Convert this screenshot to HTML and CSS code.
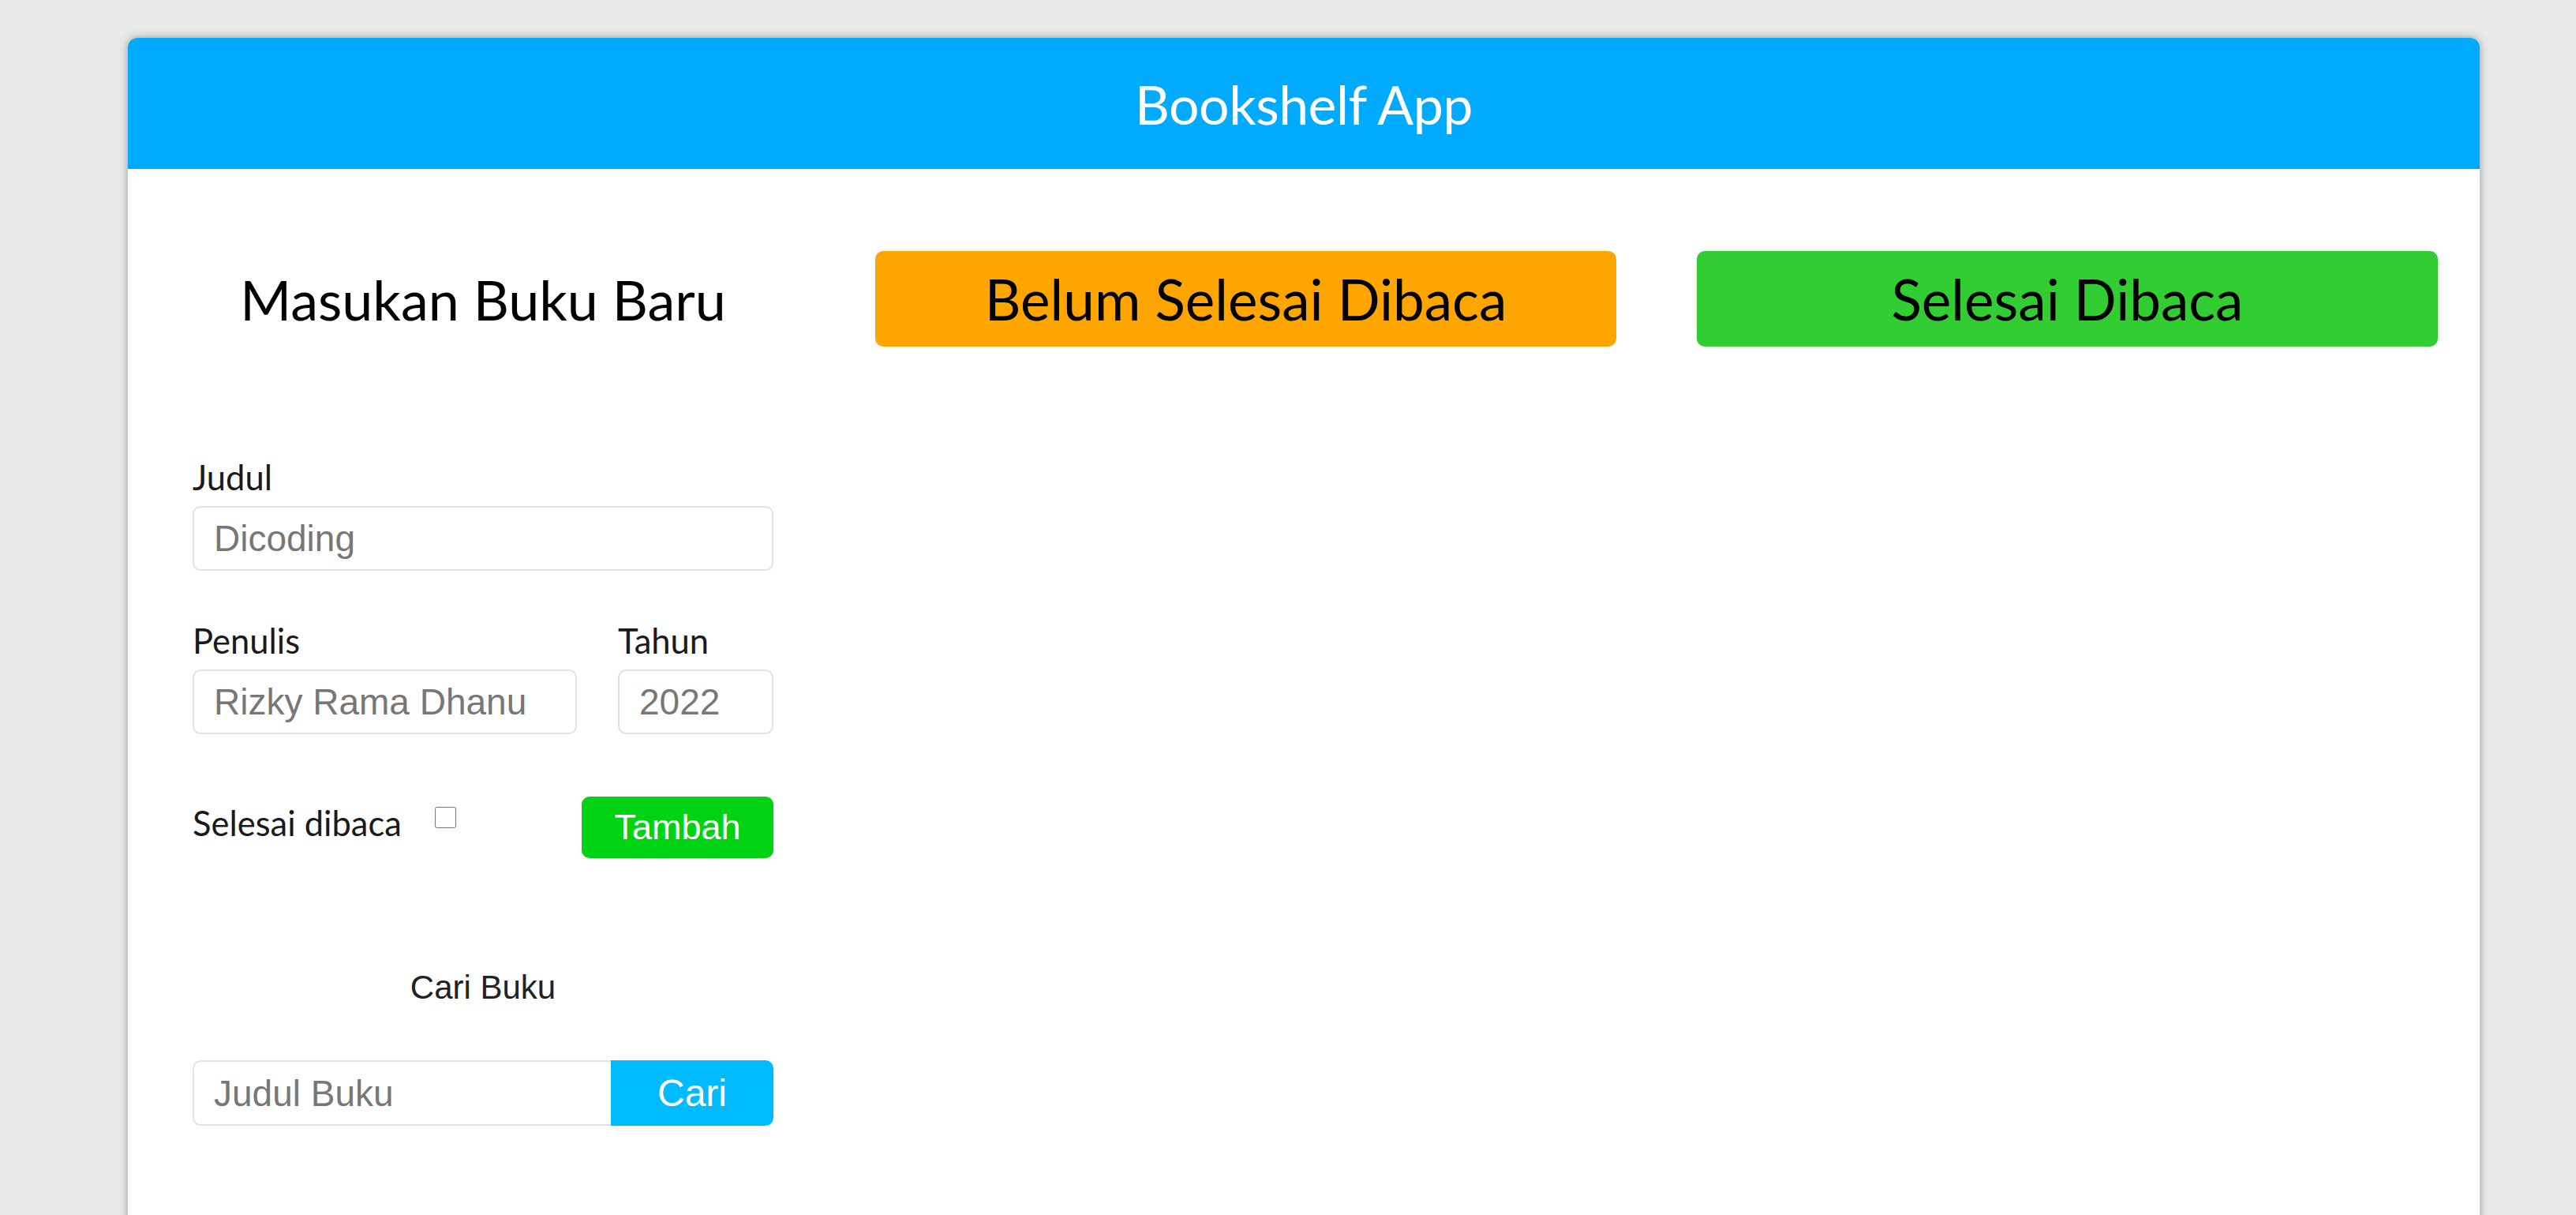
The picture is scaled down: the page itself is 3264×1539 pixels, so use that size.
FILE: index.html
```html
<!DOCTYPE html>
<html lang="id">
<head>
<meta charset="utf-8">
<title>Bookshelf App</title>
<link rel="stylesheet" href="styles.css">
</head>
<body>
<div class="app">
  <header class="app-header">
    <h1 class="app-title">Bookshelf App</h1>
  </header>
  <main class="app-main">
    <section class="col-input">
      <h2 class="col-heading">Masukan Buku Baru</h2>
      <form class="book-form">
        <div class="field">
          <label class="field-label" for="inputJudul">Judul</label>
          <input class="text-input" id="inputJudul" type="text" placeholder="Dicoding">
        </div>
        <div class="field-row">
          <div class="field field-grow">
            <label class="field-label" for="inputPenulis">Penulis</label>
            <input class="text-input" id="inputPenulis" type="text" placeholder="Rizky Rama Dhanu">
          </div>
          <div class="field field-year">
            <label class="field-label" for="inputTahun">Tahun</label>
            <input class="text-input" id="inputTahun" type="text" placeholder="2022">
          </div>
        </div>
        <div class="submit-row">
          <label class="check-label" for="inputSelesai">Selesai dibaca</label>
          <input class="check" id="inputSelesai" type="checkbox">
          <button class="btn-add" type="button">Tambah</button>
        </div>
      </form>
      <h3 class="search-title">Cari Buku</h3>
      <form class="search-form">
        <input class="search-input" type="text" placeholder="Judul Buku">
        <button class="btn-search" type="button">Cari</button>
      </form>
    </section>
    <section class="col-shelf">
      <h2 class="shelf-heading shelf-unread">Belum Selesai Dibaca</h2>
    </section>
    <section class="col-shelf col-shelf-last">
      <h2 class="shelf-heading shelf-read">Selesai Dibaca</h2>
    </section>
  </main>
</div>
</body>
</html>
```
FILE: styles.css
```css
* { box-sizing: border-box; }

html, body {
  margin: 0;
  padding: 0;
  height: 100%;
  overflow: hidden;
}

body {
  background: #e8eaea;
  font-family: "Lato", "Open Sans", sans-serif;
  color: #111;
}

.app {
  margin: 48px 122px 0 162px;
  min-height: 1600px;
  background: #fff;
  border-radius: 12px 12px 0 0;
  box-shadow: 0 0 12px rgba(0, 0, 0, 0.35);
}

.app-header {
  height: 166px;
  background: #00aaff;
  border-radius: 12px 12px 0 0;
  display: flex;
  align-items: center;
  justify-content: center;
}

.app-title {
  margin: 0;
  color: #fff;
  font-weight: 400;
  font-size: 68px;
  letter-spacing: -0.5px;
}

.app-main {
  display: flex;
  align-items: flex-start;
  padding: 104px 53px 0 82px;
}

.col-input {
  width: 736px;
  flex: none;
}

.col-heading {
  margin: 0;
  height: 121px;
  display: flex;
  align-items: center;
  justify-content: center;
  font-weight: 400;
  font-size: 70px;
  color: #000;
}

.col-shelf {
  width: 939px;
  flex: none;
  margin-left: 129px;
}

.col-shelf-last {
  margin-left: 102px;
}

.shelf-heading {
  margin: 0;
  height: 121px;
  border-radius: 10px;
  display: flex;
  align-items: center;
  justify-content: center;
  font-weight: 400;
  font-size: 71px;
  color: #000;
}

.shelf-unread { background: #ffa500; }
.shelf-read { background: #32cd32; }

.book-form {
  margin-top: 138px;
}

.field {
  display: flex;
  flex-direction: column;
}

.field-label {
  font-size: 43.5px;
  line-height: 54px;
  color: #1a1a1a;
  margin-bottom: 10px;
}

.text-input {
  height: 82px;
  width: 100%;
  border: 2px solid #e2e2e2;
  border-radius: 10px;
  padding: 0 25px;
  font-family: "Liberation Sans", Arial, sans-serif;
  font-size: 46px;
  color: #333;
  background: #fff;
  outline: none;
}

.text-input::placeholder,
.search-input::placeholder {
  color: #777;
}

.field-row {
  display: flex;
  gap: 52px;
  margin-top: 61px;
}

.field-grow {
  flex: 1;
}

.field-year {
  width: 197px;
  flex: none;
}

.submit-row {
  display: flex;
  align-items: center;
  margin-top: 79px;
  height: 78px;
}

.check-label {
  font-size: 43.5px;
  line-height: 54px;
  color: #1a1a1a;
  margin-top: -12px;
}

.check {
  width: 27px;
  height: 27px;
  margin: -26px 0 0 42px;
}

.btn-add {
  margin-left: auto;
  width: 243px;
  height: 78px;
  border: none;
  border-radius: 10px;
  background: #00d313;
  color: #fff;
  font-family: "Liberation Sans", Arial, sans-serif;
  font-size: 45px;
  padding: 0;
}

.search-title {
  margin: 140px 0 0;
  text-align: center;
  font-family: "Liberation Sans", Arial, sans-serif;
  font-weight: 400;
  font-size: 42px;
  line-height: 48px;
  color: #222;
}

.search-form {
  display: flex;
  margin-top: 68px;
  height: 83px;
}

.search-input {
  flex: 1;
  min-width: 0;
  height: 83px;
  border: 2px solid #e2e2e2;
  border-right: none;
  border-radius: 10px 0 0 10px;
  padding: 0 25px;
  font-family: "Liberation Sans", Arial, sans-serif;
  font-size: 46px;
  outline: none;
}

.btn-search {
  width: 206px;
  flex: none;
  height: 83px;
  border: none;
  border-radius: 0 10px 10px 0;
  background: #00bbff;
  color: #fff;
  font-family: "Liberation Sans", Arial, sans-serif;
  font-size: 48px;
  padding: 0;
}
```
